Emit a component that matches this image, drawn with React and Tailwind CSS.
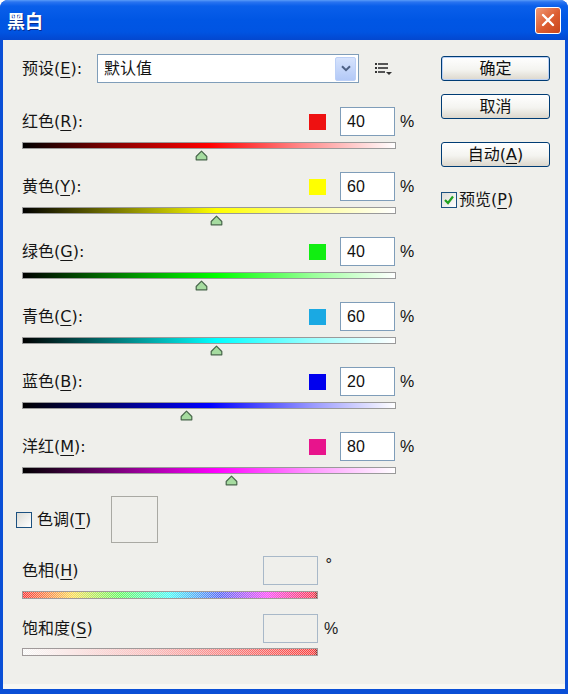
import React from "react";

const channels = [
  { name: "红色", key: "R", value: 40, swatch: "bg-[#ee1111]", bar: "bg-[linear-gradient(to_right,#000_0%,#7a0000_22%,#ff0000_50%,#ff8a8a_75%,#fff_100%)]" },
  { name: "黄色", key: "Y", value: 60, swatch: "bg-[#ffff00]", bar: "bg-[linear-gradient(to_right,#000_0%,#7a7a00_25%,#ffff00_52%,#ffff9a_78%,#fff_100%)]" },
  { name: "绿色", key: "G", value: 40, swatch: "bg-[#11ee11]", bar: "bg-[linear-gradient(to_right,#000_0%,#007a00_25%,#00ff00_52%,#9aff9a_78%,#fff_100%)]" },
  { name: "青色", key: "C", value: 60, swatch: "bg-[#1aa9e3]", bar: "bg-[linear-gradient(to_right,#000_0%,#007a7a_25%,#00ffff_52%,#9affff_78%,#fff_100%)]" },
  { name: "蓝色", key: "B", value: 20, swatch: "bg-[#0000ee]", bar: "bg-[linear-gradient(to_right,#000_0%,#00007a_25%,#0000ff_50%,#9a9aff_78%,#fff_100%)]" },
  { name: "洋红", key: "M", value: 80, swatch: "bg-[#e8148c]", bar: "bg-[linear-gradient(to_right,#000_0%,#7a007a_25%,#ff00ff_52%,#ff9aff_78%,#fff_100%)]" },
];

const Label = ({ text, letter, colon = true }) => (
  <span className="text-[16px] leading-none text-[#151515] whitespace-nowrap">
    {text}(<span className="underline underline-offset-[3px]">{letter}</span>){colon ? ":" : ""}
  </span>
);

const NumBox = ({ value }) => (
  <div className="w-[55px] h-[29px] border border-[#7f9db9] bg-white flex items-center pl-[6px] text-[16px] text-[#111] font-['Liberation_Sans',sans-serif]">
    {value}
  </div>
);

const Btn = ({ children, primary = false }) => (
  <div
    className={
      primary
        ? "w-[109px] h-[25px] rounded-[3px] border border-[#003c74] bg-[linear-gradient(#ffffff,#f4f4f0_55%,#dcd7cc)] shadow-[inset_0_0_0_1px_#b9d0f6] flex items-center justify-center text-[16px] text-[#111]"
        : "w-[109px] h-[25px] rounded-[3px] border border-[#003c74] bg-[linear-gradient(#ffffff,#f4f4f0_55%,#dcd7cc)] flex items-center justify-center text-[16px] text-[#111]"
    }
  >
    {children}
  </div>
);

const Thumb = ({ value }) => (
  <svg
    width="13"
    height="11"
    viewBox="0 0 13 11"
    style={{ marginLeft: Math.round(((value + 200) / 500) * 373) - 6 }}
  >
    <path d="M6.5 1.2 L11.8 6.5 L11.8 9.8 L1.2 9.8 L1.2 6.5 Z" fill="#a6dca0" stroke="#47664a" strokeWidth="1.2" strokeLinejoin="round" />
  </svg>
);

const SliderRow = ({ ch }) => (
  <div className="h-[65px] flex flex-col">
    <div className="h-[29px] flex items-center">
      <Label text={ch.name} letter={ch.key} />
      <div className={`ml-auto w-[17px] h-[16px] ${ch.swatch}`} />
      <div className="ml-[14px]">
        <NumBox value={ch.value} />
      </div>
      <span className="ml-[5px] w-[16px] text-[16px] text-[#111] font-['Liberation_Sans',sans-serif]">%</span>
    </div>
    <div className={`mt-[6px] w-[374px] h-[7px] border border-[#9a9a9a] ${ch.bar}`} />
    <div className="mt-[1px] h-[11px] flex">
      <Thumb value={ch.value} />
    </div>
  </div>
);

const Checkbox = ({ checked }) => (
  <div className="w-[16px] h-[16px] border border-[#1c5180] bg-[linear-gradient(135deg,#dcdcd6,#ffffff)] flex items-center justify-center">
    {checked && (
      <svg width="12" height="12" viewBox="0 0 12 12">
        <path d="M2 6 L5 9 L10 2.5" stroke="#21a121" strokeWidth="2.2" fill="none" />
      </svg>
    )}
  </div>
);

export default function App() {
  return (
    <div className="w-[568px] h-[694px] bg-white font-['DejaVu_Sans','Noto_Sans_CJK_SC',sans-serif]">
      <div className="w-full h-full rounded-t-[8px] bg-[#0a4fd6] flex flex-col overflow-hidden">
        {/* title bar */}
        <div className="h-[40px] shrink-0 flex items-center pl-[7px] pr-[7px] bg-[linear-gradient(180deg,#5a9cf8_0px,#2a74f0_2px,#0a5fea_6px,#0056e4_20px,#0054e2_32px,#0347cf_40px)]">
          <span className="text-[18px] font-bold text-white font-['Noto_Sans_CJK_SC',sans-serif] [text-shadow:1px_1px_0_#0a2a8a]">黑白</span>
          <div className="ml-auto w-[26px] h-[27px] rounded-[3px] border border-white bg-[linear-gradient(135deg,#f09a76,#dc5c30_55%,#c9451c)] flex items-center justify-center">
            <svg width="14" height="14" viewBox="0 0 14 14">
              <path d="M2 2 L12 12 M12 2 L2 12" stroke="#fff" strokeWidth="2.4" strokeLinecap="round" />
            </svg>
          </div>
        </div>

        {/* body */}
        <div className="flex-1 mx-[3px] mb-[5px] bg-[#efefeb] border-b-[5px] border-[#f7f7f3] flex pl-[19px] pt-[14px]">
          {/* left column */}
          <div className="w-[394px] flex flex-col">
            <div className="h-[29px] flex items-center">
              <div className="w-[75px]">
                <Label text="预设" letter="E" />
              </div>
              <div className="w-[262px] h-[29px] border border-[#7f9db9] bg-white flex items-center pl-[6px] pr-[2px]">
                <span className="text-[16px] text-[#111]">默认值</span>
                <div className="ml-auto w-[21px] h-[24px] rounded-[2px] border border-[#bcd0f7] bg-[linear-gradient(#d6e3fd,#b3c9f7)] flex items-center justify-center">
                  <svg width="10" height="7" viewBox="0 0 10 7">
                    <path d="M1 1.2 L5 5.2 L9 1.2" stroke="#4d6185" strokeWidth="2" fill="none" />
                  </svg>
                </div>
              </div>
              <svg className="ml-[16px]" width="18" height="14" viewBox="0 0 18 14">
                <rect x="0" y="1" width="2" height="2" fill="#333" />
                <rect x="3" y="1" width="10" height="2" fill="#555" />
                <rect x="0" y="5" width="2" height="2" fill="#333" />
                <rect x="3" y="5" width="10" height="2" fill="#555" />
                <rect x="0" y="9" width="2" height="2" fill="#333" />
                <rect x="3" y="9" width="7" height="2" fill="#555" />
                <path d="M11 10 L17 10 L14 13 Z" fill="#333" />
              </svg>
            </div>

            <div className="mt-[24px] flex flex-col">
              {channels.map((ch) => (
                <SliderRow key={ch.key} ch={ch} />
              ))}
            </div>

            {/* tint */}
            <div className="h-[47px] -mt-[1px] -ml-[6px] flex items-center">
              <Checkbox checked={false} />
              <span className="ml-[5px]">
                <Label text="色调" letter="T" colon={false} />
              </span>
              <div className="ml-[20px] w-[47px] h-[47px] border border-[#a9a9a3]" />
            </div>

            <div className="mt-[13px] w-[320px] flex items-center">
              <div className="w-[241px]">
                <Label text="色相" letter="H" colon={false} />
              </div>
              <div className="w-[55px] h-[29px] border border-[#a8b8c8]" />
              <span className="ml-[7px] self-start -mt-[2px] text-[15px] text-[#222]">°</span>
            </div>
            <div className="mt-[6px] w-[296px] h-[8px] border border-[#a09a9a] bg-[linear-gradient(to_right,#ff3030,#ffe050_17%,#60ff60_33%,#40ffff_50%,#5060ff_67%,#ff40ff_83%,#ff3050_99%,#902020)]">
              <div className="w-full h-full bg-[repeating-conic-gradient(#efefeb_0_25%,transparent_0_50%)] bg-[length:2px_2px] opacity-60" />
            </div>

            <div className="mt-[15px] w-[340px] flex items-center">
              <div className="w-[241px]">
                <Label text="饱和度" letter="S" colon={false} />
              </div>
              <div className="w-[55px] h-[29px] border border-[#a8b8c8]" />
              <span className="ml-[6px] text-[16px] text-[#222] font-['Liberation_Sans',sans-serif]">%</span>
            </div>
            <div className="mt-[5px] w-[296px] h-[8px] border border-[#a09a9a] bg-[linear-gradient(to_right,#ffffff,#ffb8b8_45%,#ff3a3a_99%,#902020)]">
              <div className="w-full h-full bg-[repeating-conic-gradient(#efefeb_0_25%,transparent_0_50%)] bg-[length:2px_2px] opacity-60" />
            </div>
          </div>

          {/* right column */}
          <div className="ml-[25px] mt-[2px] flex flex-col">
            <Btn primary>确定</Btn>
            <div className="mt-[13px]">
              <Btn>取消</Btn>
            </div>
            <div className="mt-[23px]">
              <Btn>
                <span>
                  自动(<span className="underline underline-offset-[3px]">A</span>)
                </span>
              </Btn>
            </div>
            <div className="mt-[21px] flex items-center">
              <Checkbox checked />
              <span className="ml-[2px]">
                <Label text="预览" letter="P" colon={false} />
              </span>
            </div>
          </div>
        </div>
      </div>
    </div>
  );
}
